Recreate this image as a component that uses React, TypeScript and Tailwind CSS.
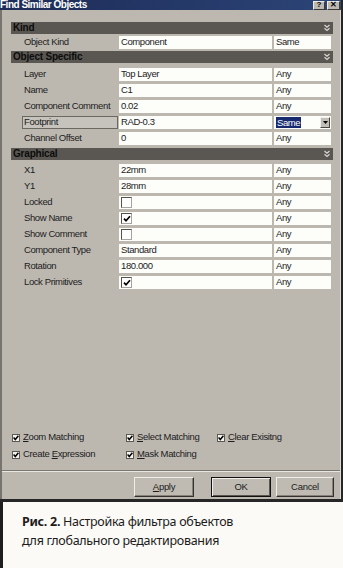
import React from "react";

const Chevron = () => (
  <svg width="6" height="8" viewBox="0 0 6 8" className="mr-[3px]">
    <polyline points="0.5,1 3,3.2 5.5,1" fill="none" stroke="#d8d6d0" strokeWidth="1.2" />
    <polyline points="0.5,4.2 3,6.4 5.5,4.2" fill="none" stroke="#d8d6d0" strokeWidth="1.2" />
  </svg>
);

const Header = ({ title, className }: { title: string; className?: string }) => (
  <div className={"h-[12px] w-[322px] bg-[#5a5752] flex items-center justify-between " + (className || "")}>
    <span className="pl-[2px] text-[10px] leading-[12px] font-bold text-[#0c0c0c] tracking-[-0.2px]">{title}</span>
    <Chevron />
  </div>
);

const Check = ({ checked }: { checked: boolean }) => (
  <div className="w-[11px] h-[11px] ml-[2px] bg-white border border-t-[#55524d] border-l-[#55524d] border-b-[#a8a59e] border-r-[#a8a59e] flex items-center justify-center">
    {checked && (
      <svg width="8" height="8" viewBox="0 0 8 8">
        <path d="M1 3.6 L3 5.8 L7 1.2" fill="none" stroke="#000" strokeWidth="1.7" />
      </svg>
    )}
  </div>
);

type RowProps = {
  label: string;
  value?: string;
  check?: boolean;
  right?: string;
  className?: string;
  boxed?: boolean;
  dropdown?: boolean;
};

const Row = ({ label, value, check, right = "Any", className, boxed, dropdown }: RowProps) => (
  <div className={"h-[13px] flex items-stretch " + (className || "")}>
    <div className="w-[108px] flex items-stretch">
      {boxed ? (
        <div className="ml-[11px] w-[96px] border border-[#6b6862] bg-[#c6c3bc] flex items-center pl-[1px] text-[9.5px] text-[#1c1c1c] tracking-[-0.4px]">
          {label}
        </div>
      ) : (
        <div className="pl-[13px] flex items-center text-[9.5px] text-[#1c1c1c] tracking-[-0.4px]">{label}</div>
      )}
    </div>
    <div className="w-[153px] bg-[#fdfdfa] flex items-center">
      {check !== undefined ? (
        <Check checked={check} />
      ) : (
        <span className="pl-[2px] text-[9.5px] text-[#1c1c1c] tracking-[-0.4px]">{value}</span>
      )}
    </div>
    <div className="w-[57px] ml-[2px] bg-[#fdfdfa] flex items-center justify-between">
      {dropdown ? (
        <>
          <span className="ml-[2px] bg-[#182a6e] text-white px-[1px] text-[9.5px] leading-[11px] tracking-[-0.4px]">{right}</span>
          <div className="w-[10px] h-[11px] mr-[1px] bg-[#c2beb6] border border-t-[#f2f0ea] border-l-[#f2f0ea] border-b-[#4a4741] border-r-[#4a4741] flex items-center justify-center">
            <svg width="5" height="3" viewBox="0 0 5 3">
              <polygon points="0,0 5,0 2.5,3" fill="#000" />
            </svg>
          </div>
        </>
      ) : (
        <span className="pl-[2px] text-[9.5px] text-[#1c1c1c] tracking-[-0.4px]">{right}</span>
      )}
    </div>
  </div>
);

const SmallCheck = ({ children }: { children: React.ReactNode }) => (
  <div className="flex items-center gap-[3px] h-[13px]">
    <div className="w-[8px] h-[8px] bg-[#f4f3ef] border border-[#5b5852] flex items-center justify-center">
      <svg width="6" height="6" viewBox="0 0 6 6">
        <path d="M0.6 2.6 L2.3 4.5 L5.4 0.8" fill="none" stroke="#000" strokeWidth="1.5" />
      </svg>
    </div>
    <span className="text-[9.5px] text-[#1c1c1c] tracking-[-0.35px]">{children}</span>
  </div>
);

const Btn = ({ children, className, isDefault }: { children: React.ReactNode; className?: string; isDefault?: boolean }) => (
  <div
    className={
      "h-[20px] flex items-center justify-center bg-[#bfbbb3] text-[9.5px] text-[#1c1c1c] tracking-[-0.3px] " +
      (isDefault
        ? "border border-[#111] shadow-[inset_1px_1px_0_#efede7,inset_-1px_-1px_0_#5a5752] "
        : "border border-t-[#efede7] border-l-[#efede7] border-b-[#34322e] border-r-[#34322e] shadow-[inset_-1px_-1px_0_#86827b] ") +
      (className || "")
    }
  >
    {children}
  </div>
);

export default function App() {
  return (
    <div className="w-[343px] h-[568px] bg-[#fbfaf6] flex flex-col overflow-hidden font-['Liberation_Sans',Arial,sans-serif]">
      <div className="h-[502px] bg-[#262626] flex flex-col pb-[3px]">
        <div className="w-[341px] flex-1 flex flex-col">
          {/* title bar */}
          <div className="h-[10px] bg-gradient-to-r from-[#1d2b57] to-[#2c4577] flex items-center justify-between">
            <span className="text-[10px] leading-[10px] font-bold text-white tracking-[-0.5px]">Find Similar Objects</span>
            <div className="flex gap-[2px] mr-[1px]">
              <div className="w-[12px] h-[9px] bg-[#bdb9b1] border border-t-[#eeece6] border-l-[#eeece6] border-b-[#3c3a36] border-r-[#3c3a36] flex items-center justify-center text-[8px] leading-[8px] font-bold text-black">?</div>
              <div className="w-[13px] h-[9px] bg-[#bdb9b1] border border-t-[#eeece6] border-l-[#eeece6] border-b-[#3c3a36] border-r-[#3c3a36] flex items-center justify-center text-[8px] leading-[8px] font-bold text-black">✕</div>
            </div>
          </div>
          {/* body */}
          <div className="flex-1 bg-[#bcb8b0] border-l-2 border-l-[#77736d] border-r border-r-[#dedbd4] flex flex-col">
            <div className="pl-[9px] pt-[12px] flex flex-col">
              <Header title="Kind" />
              <Row label="Object Kind" value="Component" right="Same" className="mt-[2px]" />
              <Header title="Object Specific" className="mt-[2px]" />
              <Row label="Layer" value="Top Layer" className="mt-[5px]" />
              <Row label="Name" value="C1" className="mt-[3px]" />
              <Row label="Component Comment" value="0.02" className="mt-[3px]" />
              <Row label="Footprint" value="RAD-0.3" right="Same" boxed dropdown className="mt-[3px]" />
              <Row label="Channel Offset" value="0" className="mt-[3px]" />
              <Header title="Graphical" className="mt-[3px]" />
              <Row label="X1" value="22mm" className="mt-[4px]" />
              <Row label="Y1" value="28mm" className="mt-[3px]" />
              <Row label="Locked" check={false} className="mt-[3px]" />
              <Row label="Show Name" check={true} className="mt-[3px]" />
              <Row label="Show Comment" check={false} className="mt-[3px]" />
              <Row label="Component Type" value="Standard" className="mt-[3px]" />
              <Row label="Rotation" value="180.000" className="mt-[3px]" />
              <Row label="Lock Primitives" check={true} className="mt-[3px]" />
            </div>
            <div className="flex-1" />
            <div className="pl-[10px] flex flex-col gap-[4px]">
              <div className="flex">
                <div className="w-[114px]">
                  <SmallCheck><u>Z</u>oom Matching</SmallCheck>
                </div>
                <div className="w-[91px]">
                  <SmallCheck><u>S</u>elect Matching</SmallCheck>
                </div>
                <SmallCheck><u>C</u>lear Exisitng</SmallCheck>
              </div>
              <div className="flex">
                <div className="w-[114px]">
                  <SmallCheck>Create <u>E</u>xpression</SmallCheck>
                </div>
                <SmallCheck><u>M</u>ask Matching</SmallCheck>
              </div>
            </div>
            <div className="mt-[9px] h-[2px] border-t border-t-[#7b7771] border-b border-b-[#e9e7e1]" />
            <div className="mt-[5px] mb-[2px] flex justify-end pr-[6px]">
              <Btn className="w-[60px] mr-[17px]"><span><u>A</u>pply</span></Btn>
              <Btn className="w-[60px] mr-[5px]" isDefault>OK</Btn>
              <Btn className="w-[58px]">Cancel</Btn>
            </div>
          </div>
        </div>
      </div>
      {/* caption */}
      <div className="flex-1 border-l-[3px] border-l-[#1e1e1e] pl-[19px] pt-[10px] font-['Noto_Sans',sans-serif] text-[12.5px] leading-[19px] text-[#1d1b1b] tracking-[-0.3px]">
        <div>
          <span className="font-bold">Рис. 2.</span> Настройка фильтра объектов
        </div>
        <div>для глобального редактирования</div>
      </div>
    </div>
  );
}
